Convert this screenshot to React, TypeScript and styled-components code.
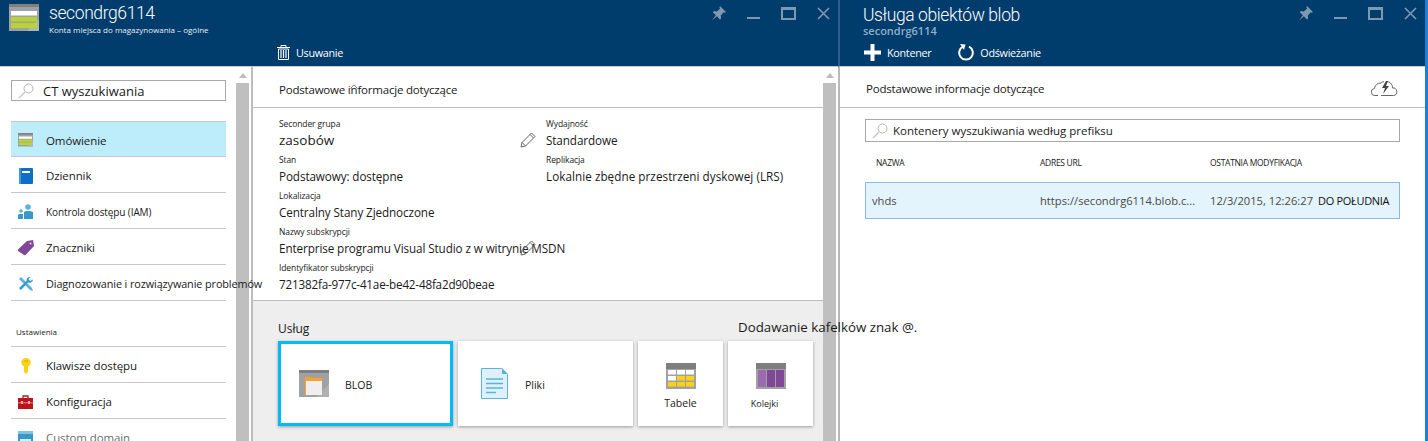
import React from "react"
import styled, { createGlobalStyle } from "styled-components"

const GlobalStyle = createGlobalStyle`
  html, body {
    margin: 0;
    padding: 0;
    background: #fff;
    overflow: hidden;
  }
  * {
    box-sizing: border-box;
  }
`

const StorageIcon = ({ size = 30 }: { size?: number }) => (
  <svg width={size} height={size * 0.9} viewBox="0 0 30 27">
    <rect width="30" height="27" fill="#a0a1a2" />
    <path d="M0 0h30v3H0z" fill="#7f7f7f" />
    <path d="M18 27L30 15v12z" fill="#b4b4b4" />
    <rect x="2" y="7" width="26" height="4.500" fill="#fff" />
    <rect x="2" y="13" width="26" height="4.500" fill="#b8d432" />
    <rect x="2" y="19" width="26" height="5" fill="#b8d432" />
  </svg>
)

const PinIcon = () => (
  <svg width="15" height="15" viewBox="0 0 15 15">
    <path d="M9 0l6 6-1.200.8-1-.6-3 3.200.3 3-1.200 1-3-3.200L1 14.500l3.800-5.200-3-3 1.100-1.200 3 .3 3.200-3-.7-1z" fill="#7e98b2" />
  </svg>
)

const WindowControls = () => (
  <Controls>
    <PinIcon />
    <svg width="13" height="13" viewBox="0 0 13 13">
      <rect y="10" width="13" height="2" fill="#7e98b2" />
    </svg>
    <svg width="15" height="13" viewBox="0 0 15 13">
      <rect x="1" y="1" width="13" height="11" fill="none" stroke="#7e98b2" strokeWidth="2" />
      <rect x="1" y="1" width="13" height="2" fill="#7e98b2" />
    </svg>
    <svg width="13" height="13" viewBox="0 0 13 13">
      <path d="M1 1l11 11M12 1L1 12" stroke="#7e98b2" strokeWidth="1.600" />
    </svg>
  </Controls>
)

const SearchIcon = () => (
  <svg width="16" height="16" viewBox="0 0 16 16">
    <circle cx="10.500" cy="5.500" r="4.500" fill="none" stroke="#b5b5b5" />
    <path d="M7 9l-6 6" stroke="#c4c4c4" strokeWidth="1.200" />
  </svg>
)

const PencilIcon = () => (
  <svg width="16" height="16" viewBox="0 0 16 16">
    <path d="M1 15l1-4.500L11.500 1 15 4.500 5.500 14z" fill="none" stroke="#666" />
    <path d="M2 10.500L5.500 14M10 2.500L13.500 6" stroke="#666" />
  </svg>
)

const menuIcons: Record<string, React.ReactNode> = {
  storage: <StorageIcon size={15} />,
  log: (
    <svg width="14" height="16" viewBox="0 0 14 16">
      <rect width="14" height="16" rx="1" fill="#0f6fc6" />
      <rect x="3" y="3" width="8" height="2" fill="#fff" />
      <rect width="2" height="16" fill="#3e9ad9" />
    </svg>
  ),
  iam: (
    <svg width="16" height="15" viewBox="0 0 16 15">
      <circle cx="10" cy="3" r="2.800" fill="#59b4d9" />
      <path d="M6 15V8l2-1h4l3 1v7z" fill="#3999c6" />
      <circle cx="3" cy="7" r="1.800" fill="#59b4d9" />
      <path d="M0 15v-4l1-1h4v5z" fill="#3999c6" />
    </svg>
  ),
  tag: (
    <svg width="16" height="16" viewBox="0 0 16 16">
      <path d="M0 9.500L9 1l6-1 1 6-8.500 9a1 1 0 0 1-1.400 0L0 11z" fill="#804998" />
      <circle cx="12.500" cy="3.500" r="1" fill="#e8dcef" />
    </svg>
  ),
  tools: (
    <svg width="16" height="16" viewBox="0 0 16 16">
      <path d="M1 3l2-2 11 11 1 3-3-1z" fill="#59b4d9" />
      <path d="M15 3.500a3.500 3.500 0 0 1-5 3L3.500 13.500a1.500 1.500 0 0 1-2-2L8.500 5a3.500 3.500 0 0 1 4-4L10.500 3 12 5z" fill="#3999c6" />
    </svg>
  ),
  key: (
    <svg width="10" height="16" viewBox="0 0 10 16">
      <path d="M5 0a4.500 4.500 0 0 1 2 8.600V14l-2 2-2-2V8.600A4.500 4.500 0 0 1 5 0z" fill="#fcd116" />
      <rect x="3" y="2.500" width="4" height="1.200" fill="#e0a800" />
    </svg>
  ),
  config: (
    <svg width="15" height="14" viewBox="0 0 15 14">
      <path d="M5 3V1h5v2" fill="none" stroke="#a4262c" strokeWidth="1.300" />
      <rect y="3" width="15" height="11" fill="#ba141a" />
      <rect y="7" width="15" height="1.500" fill="#e25a5a" />
      <rect x="3" y="6" width="2" height="3" fill="#f0b0b0" />
      <rect x="10" y="6" width="2" height="3" fill="#f0b0b0" />
    </svg>
  ),
  domain: (
    <svg width="15" height="13" viewBox="0 0 15 13">
      <rect width="15" height="13" fill="#3999c6" />
      <rect y="0" width="15" height="3" fill="#7fc4e4" />
      <rect x="2" y="8" width="11" height="2" fill="#d6ecf6" />
    </svg>
  ),
}

const menuTop = [
  { icon: "storage", label: "Omówienie", active: true },
  { icon: "log", label: "Dziennik" },
  { icon: "iam", label: "Kontrola dostępu (IAM)", size: 10 },
  { icon: "tag", label: "Znaczniki" },
  { icon: "tools", label: "Diagnozowanie i rozwiązywanie problemów", size: 10.85 },
]

const menuSettings = [
  { icon: "key", label: "Klawisze dostępu" },
  { icon: "config", label: "Konfiguracja" },
  { icon: "domain", label: "Custom domain", faded: true },
]

const leftFields = [
  { label: "Seconder grupa", value: "zasobów", big: true },
  { label: "Stan", value: "Podstawowy: dostępne" },
  { label: "Lokalizacja", value: "Centralny Stany Zjednoczone" },
  { label: "Nazwy subskrypcji", value: "Enterprise programu Visual Studio z w witrynie MSDN" },
  { label: "Identyfikator subskrypcji", value: "721382fa-977c-41ae-be42-48fa2d90beae", track: -0.2 },
]

const rightFields = [
  { label: "Wydajność", value: "Standardowe" },
  { label: "Replikacja", value: "Lokalnie zbędne przestrzeni dyskowej (LRS)", track: 0.05 },
]

const Field = ({ label, value, big, track }: { label: string; value: string; big?: boolean; track?: number }) => (
  <FieldBox>
    <FieldLabel>{label}</FieldLabel>
    <FieldValue $big={big} $track={track}>
      {value}
    </FieldValue>
  </FieldBox>
)

const ScrollBar = () => (
  <Scroll>
    <ScrollArrow />
    <ScrollThumb />
  </Scroll>
)

const App = () => {
  return (
    <Page>
      <GlobalStyle />
      <MainBlade>
        <Header>
          <HeaderTop>
            <StorageIcon />
            <TitleBlock>
              <Title>secondrg6114</Title>
              <Subtitle>Konta miejsca do magazynowania – ogólne</Subtitle>
            </TitleBlock>
            <WindowControls />
          </HeaderTop>
          <MainToolbar>
            <ToolButton>
              <svg width="13" height="15" viewBox="0 0 13 15">
                <path d="M0 2.500h13M4 2V.5h5V2" fill="none" stroke="#fff" />
                <path d="M1.500 4h10v10.500h-10z" fill="none" stroke="#fff" />
                <path d="M4 5v8M6.500 5v8M9 5v8" stroke="#fff" strokeWidth="1.200" />
              </svg>
              Usuwanie
            </ToolButton>
          </MainToolbar>
        </Header>
        <MainBody>
          <Menu>
            <MenuSearch>
              <SearchIcon />
              <span>CT wyszukiwania</span>
            </MenuSearch>
            <MenuList>
              {menuTop.map(item => (
                <MenuRow key={item.label} $active={item.active}>
                  <MenuIcon>{menuIcons[item.icon]}</MenuIcon>
                  <MenuLabel $size={item.size}>{item.label}</MenuLabel>
                </MenuRow>
              ))}
            </MenuList>
            <SectionTitle>Ustawienia</SectionTitle>
            <MenuList>
              {menuSettings.map(item => (
                <MenuRow key={item.label} $faded={item.faded}>
                  <MenuIcon>{menuIcons[item.icon]}</MenuIcon>
                  <MenuLabel>{item.label}</MenuLabel>
                </MenuRow>
              ))}
            </MenuList>
          </Menu>
          <ScrollBar />
          <Content>
            <EssentialsBar>
              Podstawowe informacje dotyczące
              <StrayCaret>
                <svg width="8" height="5" viewBox="0 0 8 5">
                  <path d="M.5 4.500L4 .8l3.500 3.700" fill="none" stroke="#777" />
                </svg>
              </StrayCaret>
            </EssentialsBar>
            <Essentials>
              <FieldColumn>
                {leftFields.map(f => (
                  <Field key={f.label} {...f} />
                ))}
                <PencilTop>
                  <PencilIcon />
                </PencilTop>
                <PencilBottom>
                  <PencilIcon />
                </PencilBottom>
              </FieldColumn>
              <FieldColumn>
                {rightFields.map(f => (
                  <Field key={f.label} {...f} />
                ))}
              </FieldColumn>
            </Essentials>
            <Services>
              <ServicesTitle>Usług</ServicesTitle>
              <Tiles>
                <WideTile $selected>
                  <svg width="30" height="27" viewBox="0 0 30 27">
                    <rect width="30" height="27" fill="#a0a1a2" />
                    <rect width="30" height="3" fill="#7f7f7f" />
                    <path d="M17 27L30 14v13z" fill="#b0b0b0" />
                    <path d="M6 7h6l1 1h10v3H7v14H6z" fill="#ff9f2e" />
                    <rect x="7" y="11" width="16" height="14" fill="#efefef" />
                  </svg>
                  <TileText>BLOB</TileText>
                </WideTile>
                <WideTile>
                  <svg width="27" height="31" viewBox="0 0 27 31">
                    <path d="M.5.5h20l6 6v24H.5z" fill="#def1fa" stroke="#59b4d9" />
                    <path d="M21 0l6 6h-6z" fill="#59b4d9" />
                    <path d="M5 11h17M5 15.500h17M5 20h17M5 24.500h10" stroke="#59b4d9" strokeWidth="1.600" />
                  </svg>
                  <TileText>Pliki</TileText>
                </WideTile>
                <NarrowTile>
                  <svg width="30" height="26" viewBox="0 0 30 26">
                    <rect width="30" height="26" fill="#a0a1a2" />
                    <rect width="30" height="6" fill="#7f7f7f" />
                    <path d="M2 7h8v4.500H2zM11 7h8v4.500h-8zM20 7h8v4.500h-8zM2 13h8v4.500H2z" fill="#fff" />
                    <path d="M11 13h8v4.500h-8zM20 13h8v4.500h-8zM2 19h8v4.500H2zM11 19h8v4.500h-8zM20 19h8v4.500h-8z" fill="#fcd116" />
                  </svg>
                  <TileCaption>Tabele</TileCaption>
                </NarrowTile>
                <NarrowTile>
                  <svg width="30" height="26" viewBox="0 0 30 26">
                    <rect width="30" height="26" fill="#a0a1a2" />
                    <rect width="30" height="6" fill="#7f7f7f" />
                    <rect x="2" y="7" width="8" height="17" fill="#9b6bae" />
                    <rect x="11" y="7" width="8" height="17" fill="#804998" />
                    <rect x="20" y="7" width="8" height="17" fill="#804998" />
                  </svg>
                  <TileCaption $small>Kolejki</TileCaption>
                </NarrowTile>
              </Tiles>
            </Services>
          </Content>
          <ScrollBar />
        </MainBody>
      </MainBlade>

      <SideBlade>
        <SideHeader>
          <SideHeaderTop>
            <TitleBlock>
              <SideTitle>Usługa obiektów blob</SideTitle>
              <SideSubtitle>secondrg6114</SideSubtitle>
            </TitleBlock>
            <WindowControls />
          </SideHeaderTop>
          <SideToolbar>
            <ToolButton>
              <svg width="17" height="17" viewBox="0 0 17 17">
                <path d="M6.500 0h4v6.500H17v4h-6.500V17h-4v-6.500H0v-4h6.500z" fill="#fff" />
              </svg>
              Kontener
            </ToolButton>
            <ToolButton>
              <svg width="16" height="18" viewBox="0 0 16 18">
                <path d="M5 3.700a6.800 6.800 0 1 0 6 0" fill="none" stroke="#fff" strokeWidth="2" />
                <path d="M2 1l5.500.5L6 7z" fill="#fff" />
              </svg>
              Odświeżanie
            </ToolButton>
          </SideToolbar>
        </SideHeader>
        <SidePanel>
          <EssentialsRow>
            <span>Podstawowe informacje dotyczące</span>
            <svg width="27" height="17" viewBox="0 0 27 17">
              <path d="M7 15.500H4a3.500 3.500 0 0 1-.5-7A6 6 0 0 1 10 3a6 6 0 0 1 3-1.500M15 1.500a6 6 0 0 1 6.500 6.500 3.700 3.700 0 0 1 1 7.500H10" fill="none" stroke="#666" />
              <path d="M15 1l-4 7h3l-2 6 6-8h-3l2-5z" fill="#444" />
            </svg>
          </EssentialsRow>
          <SideBody>
            <ContainerSearch>
              <SearchIcon />
              <span>Kontenery wyszukiwania według prefiksu</span>
            </ContainerSearch>
            <TableHead>
              <span>NAZWA</span>
              <span>ADRES URL</span>
              <span>OSTATNIA MODYFIKACJA</span>
            </TableHead>
            <TableRow>
              <span>vhds</span>
              <span>https://secondrg6114.blob.c...</span>
              <span>
                12/3/2015, 12:26:27 <Noon>DO POŁUDNIA</Noon>
              </span>
            </TableRow>
          </SideBody>
        </SidePanel>
      </SideBlade>
      <EdgeStrip />
      <FloatingNote>Dodawanie kafelków znak @.</FloatingNote>
    </Page>
  )
}

export default App

const Page = styled.div`
  position: relative;
  display: flex;
  width: 1428px;
  height: 441px;
  overflow: hidden;
  font-family: "Open Sans", "Liberation Sans", sans-serif;
  color: #1a1a1a;
  background: #fff;
`

const MainBlade = styled.section`
  width: 838px;
  flex: none;
  display: flex;
  flex-direction: column;
`

const SideBlade = styled.section`
  width: 587px;
  flex: none;
  display: flex;
  flex-direction: column;
`

const SidePanel = styled.div`
  flex: 1;
  border-left: 2px solid #b9b9b9;
`

const EdgeStrip = styled.div`
  width: 3px;
  flex: none;
  background: #1a7fd6;
`

const Header = styled.header`
  height: 67px;
  flex: none;
  background: #003c6c;
  color: #fff;
  border-bottom: 1px solid #c8c8c8;
  display: flex;
  flex-direction: column;
`

const SideHeader = styled(Header)`
  border-left: 2px solid #2c5f8c;
`

const HeaderTop = styled.div`
  height: 41px;
  display: flex;
  align-items: flex-start;
  padding: 4px 8px 0 9px;
  gap: 10px;
`

const SideHeaderTop = styled(HeaderTop)`
  padding-left: 23px;
`

const TitleBlock = styled.div`
  flex: 1;
  display: flex;
  flex-direction: column;
`

const Title = styled.h1`
  margin: -1px 0 0;
  font-family: Roboto, "Open Sans", sans-serif;
  font-size: 17.500px;
  line-height: 20px;
  font-weight: 300;
  letter-spacing: -0.4px;
`

const SideTitle = styled(Title)`
  margin-top: 1px;
`

const Subtitle = styled.div`
  font-size: 8px;
  line-height: 11px;
  margin-top: 1px;
  color: #e8eef3;
`

const SideSubtitle = styled.div`
  font-size: 11px;
  line-height: 12px;
  color: #8fb1cc;
  font-weight: 600;
`

const Controls = styled.div`
  display: flex;
  align-items: center;
  gap: 21px;
  margin-top: 2px;
  flex: none;
`

const MainToolbar = styled.div`
  height: 22px;
  padding-left: 277px;
  display: flex;
  align-items: center;
`

const SideToolbar = styled.div`
  height: 22px;
  padding-left: 24px;
  display: flex;
  align-items: center;
  gap: 27px;
`

const ToolButton = styled.div`
  display: flex;
  align-items: center;
  gap: 6px;
  font-size: 10.800px;
  letter-spacing: -0.3px;
`

const MainBody = styled.div`
  flex: 1;
  display: flex;
  min-height: 0;
`

const Menu = styled.nav`
  position: relative;
  z-index: 2;
  width: 236px;
  flex: none;
  padding: 13px 10px 0 11px;
`

const MenuSearch = styled.div`
  height: 21px;
  border: 1px solid #a9a9a9;
  display: flex;
  align-items: center;
  gap: 9px;
  padding-left: 6px;
  font-size: 13px;
  margin-bottom: 20px;
  white-space: nowrap;
`

const MenuList = styled.div`
  border-top: 1px solid #c8c8c8;
`

const MenuRow = styled.div<{ $active?: boolean; $faded?: boolean }>`
  height: ${p => (p.$active ? "35px" : "36px")};
  padding-top: 2px;
  display: flex;
  align-items: center;
  border-bottom: 1px solid #c8c8c8;
  white-space: nowrap;
  background: ${p => (p.$active ? "#bdecfa" : "transparent")};
  color: ${p => (p.$faded ? "#6e6e6e" : "#1a1a1a")};
`

const MenuIcon = styled.span`
  width: 35px;
  flex: none;
  display: flex;
  justify-content: center;
  padding-right: 6px;
`

const MenuLabel = styled.span<{ $size?: number }>`
  font-size: ${p => p.$size ?? 11.5}px;
  letter-spacing: -0.1px;
`

const SectionTitle = styled.div`
  font-size: 8px;
  height: 45px;
  padding: 25px 0 0 5px;
  line-height: 11px;
`

const Scroll = styled.div`
  width: 15px;
  flex: none;
  padding: 6px 2px 0 0;
  background: #fff;
  display: flex;
  flex-direction: column;
  align-items: center;
  gap: 5px;
`

const ScrollArrow = styled.div`
  width: 0;
  height: 0;
  border-left: 4px solid transparent;
  border-right: 4px solid transparent;
  border-bottom: 5px solid #bdbdbd;
`

const ScrollThumb = styled.div`
  width: 13px;
  flex: 1;
  background: #bfbfbf;
`

const Content = styled.main`
  width: 572px;
  flex: none;
  border-left: 2px solid #bdbdbd;
  display: flex;
  flex-direction: column;
`

const EssentialsBar = styled.div`
  position: relative;
  height: 41px;
  flex: none;
  border-bottom: 1px solid #bdbdbd;
  padding: 15px 0 0 26px;
  font-size: 11.500px;
  line-height: 16px;
  letter-spacing: -0.2px;
`

const StrayCaret = styled.span`
  position: absolute;
  left: 97px;
  top: 17px;
  line-height: 0;
`

const Essentials = styled.div`
  height: 193px;
  flex: none;
  display: grid;
  grid-template-columns: 267px 1fr;
  padding: 7px 0 0 26px;
  border-bottom: 1px solid #bdbdbd;
`

const FieldColumn = styled.div`
  position: relative;
  display: flex;
  flex-direction: column;
`

const FieldBox = styled.div`
  height: 36px;
  white-space: nowrap;
`

const FieldLabel = styled.div`
  font-size: 8.500px;
  line-height: 18px;
  height: 18px;
  letter-spacing: -0.1px;
`

const FieldValue = styled.div<{ $big?: boolean; $track?: number }>`
  font-size: ${p => (p.$big ? "13.500px" : "11.700px")};
  line-height: 14px;
  height: 18px;
  letter-spacing: ${p => (p.$big ? 0 : p.$track ?? -0.1)}px;
`

const PencilTop = styled.div`
  position: absolute;
  left: 241px;
  top: 16px;
`

const PencilBottom = styled(PencilTop)`
  top: 124px;
`

const Services = styled.div`
  flex: 1;
  background: #eee;
  padding: 18px 0 0 25px;
`

const ServicesTitle = styled.div`
  font-size: 12px;
  line-height: 20px;
  height: 22px;
`

const Tiles = styled.div`
  display: flex;
  gap: 5px;
`

const Tile = styled.div`
  height: 85px;
  background: #fff;
  box-shadow: 0 1px 3px rgba(0, 0, 0, 0.35);
`

const WideTile = styled(Tile)<{ $selected?: boolean }>`
  width: 175px;
  display: flex;
  align-items: center;
  gap: ${p => (p.$selected ? "16px" : "17px")};
  padding-left: ${p => (p.$selected ? "18px" : "23px")};
  border: ${p => (p.$selected ? "3px solid #00bcf2" : "none")};
`

const NarrowTile = styled(Tile)`
  width: 85px;
  display: flex;
  flex-direction: column;
  align-items: center;
  padding-top: 22px;
`

const TileText = styled.span`
  font-size: 10.500px;
  margin-top: 2px;
`

const TileCaption = styled.span<{ $small?: boolean }>`
  font-size: ${p => (p.$small ? "9px" : "10.500px")};
  margin-top: ${p => (p.$small ? "8px" : "7px")};
  margin-right: ${p => (p.$small ? "12px" : "0")};
`

const EssentialsRow = styled.div`
  height: 41px;
  border-bottom: 1px solid #bdbdbd;
  display: flex;
  justify-content: space-between;
  align-items: center;
  padding: 3px 27px 0 26px;
  font-size: 11.500px;
  letter-spacing: -0.2px;
`

const SideBody = styled.div`
  padding: 11px 25px 0 25px;
`

const ContainerSearch = styled.div`
  height: 23px;
  border: 1px solid #a9a9a9;
  display: flex;
  align-items: center;
  gap: 5px;
  padding-left: 6px;
  font-size: 11.500px;
`

const TableHead = styled.div`
  display: grid;
  grid-template-columns: 164px 170px 1fr;
  height: 40px;
  align-items: center;
  padding-left: 11px;
  font-size: 8.500px;
  letter-spacing: -0.3px;
`

const TableRow = styled.div`
  display: grid;
  grid-template-columns: 168px 170px 1fr;
  height: 37px;
  align-items: center;
  padding-left: 6px;
  background: #e3f4fc;
  border: 1px solid #8ab8ea;
  font-size: 11.200px;
  color: #4a4a4a;
  white-space: nowrap;
`

const Noon = styled.span`
  margin-left: 2px;
  color: #111;
  font-size: 11px;
  letter-spacing: -0.3px;
`

const FloatingNote = styled.div`
  position: absolute;
  left: 738px;
  top: 318px;
  z-index: 3;
  font-size: 13.300px;
  line-height: 18px;
  white-space: nowrap;
`
